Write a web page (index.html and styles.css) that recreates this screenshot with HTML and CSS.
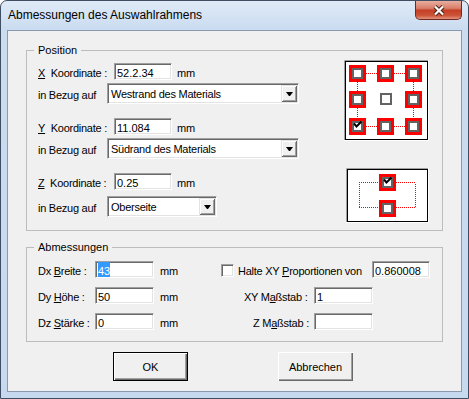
FILE: index.html
```html
<!DOCTYPE html>
<html lang="de">
<head>
  <meta charset="UTF-8" />
  <title>Abmessungen des Auswahlrahmens</title>
  <link rel="stylesheet" href="styles.css">
</head>
<body>
  <div class="window">
    <div class="titlebar">
      <span class="title">Abmessungen des Auswahlrahmens</span>
      <div class="close">
        <svg width="14" height="11" viewBox="0 0 14 11">
          <path d="M3 1.5 L11 9.5 M11 1.5 L3 9.5" stroke="#4a2018" stroke-width="4.2" fill="none"/>
          <path d="M3 1.5 L11 9.5 M11 1.5 L3 9.5" stroke="#fff" stroke-width="2.2" fill="none"/>
        </svg>
      </div>
    </div>

    <div class="client">
      <fieldset class="group group-pos">
        <legend>Position</legend>
        <div class="pos-body">
          <div class="pos-fields">
            <div class="row row-coord">
              <span class="lbl lbl-coord"><u>X</u>&nbsp; Koordinate :</span>
              <div class="field w58">52.2.34</div>
              <span class="unit">mm</span>
            </div>
            <div class="row row-ref">
              <span class="lbl lbl-ref">in Bezug auf</span>
              <div class="combo combo-wide"><span>Westrand des Materials</span><i class="combo-btn"></i></div>
            </div>

            <div class="row row-coord gap-big">
              <span class="lbl lbl-coord"><u>Y</u>&nbsp; Koordinate :</span>
              <div class="field w58">11.084</div>
              <span class="unit">mm</span>
            </div>
            <div class="row row-ref">
              <span class="lbl lbl-ref">in Bezug auf</span>
              <div class="combo combo-wide"><span>Südrand des Materials</span><i class="combo-btn"></i></div>
            </div>

            <div class="row row-coord gap-big">
              <span class="lbl lbl-coord"><u>Z</u>&nbsp; Koordinate :</span>
              <div class="field w58">0.25</div>
              <span class="unit">mm</span>
            </div>
            <div class="row row-ref row-ref-z">
              <span class="lbl lbl-ref">in Bezug auf</span>
              <div class="combo combo-small"><span>Oberseite</span><i class="combo-btn"></i></div>
            </div>
          </div>

          <div class="pos-previews">
            <svg class="preview preview-xy" width="85" height="81" viewBox="0 0 85 81">
              <defs>
                <g id="handle">
                  <rect width="17" height="17" fill="#f00"/>
                  <rect x="3" y="3" width="11" height="11" fill="#636363"/>
                  <rect x="5" y="5" width="7" height="7" fill="#fff"/>
                </g>
                <path id="tick" d="M5 5.5 L7.5 8.5 L12.5 3.5" fill="none" stroke="#000" stroke-width="2"/>
              </defs>
              <rect width="85" height="81" fill="#fff"/>
              <path d="M0.5 80 V0.5 H84" fill="none" stroke="#a0a0a0"/>
              <rect x="1.5" y="1.5" width="82" height="78" fill="none" stroke="#000"/>
              <g class="dots" stroke="#f00" stroke-dasharray="1 1" fill="none">
                <path d="M22 13.5 H33 M50 13.5 H61 M22 66.5 H33 M50 66.5 H61"/>
                <path d="M13.5 22 V31 M13.5 48 V58 M69.5 22 V31 M69.5 48 V58"/>
              </g>
              <use href="#handle" x="5" y="5"/>
              <use href="#handle" x="33" y="5"/>
              <use href="#handle" x="61" y="5"/>
              <use href="#handle" x="5" y="31"/>
              <use href="#handle" x="61" y="31"/>
              <use href="#handle" x="5" y="58"/>
              <use href="#handle" x="33" y="58"/>
              <use href="#handle" x="61" y="58"/>
              <rect x="36" y="33" width="12" height="12" fill="#636363"/>
              <rect x="38" y="35" width="8" height="8" fill="#fff"/>
              <use href="#tick" x="5" y="58"/>
            </svg>

            <svg class="preview preview-z" width="83" height="55" viewBox="0 0 83 55">
              <rect width="83" height="55" fill="#fff"/>
              <path d="M0.5 54 V0.5 H82" fill="none" stroke="#a0a0a0"/>
              <rect x="1.5" y="1.5" width="80" height="52" fill="none" stroke="#000"/>
              <g class="dots" stroke="#f00" stroke-dasharray="1 1" fill="none">
                <path d="M13 14.5 H33 M50 14.5 H70 M13 39.5 H33 M50 39.5 H70"/>
                <path d="M13.5 16 V39 M69.5 16 V39"/>
              </g>
              <use href="#handle" x="33" y="6"/>
              <use href="#handle" x="33" y="32"/>
              <use href="#tick" x="33" y="6"/>
            </svg>
          </div>
        </div>
      </fieldset>

      <fieldset class="group group-dim">
        <legend>Abmessungen</legend>
        <div class="dim-body">
          <div class="row dim-row">
            <span class="lbl lbl-dim">Dx <u>B</u>reite :</span>
            <div class="field w59"><span class="sel">43</span></div>
            <span class="unit unit-dim">mm</span>
            <span class="check"></span>
            <span class="lbl lbl-keep">Halte XY <u>P</u>roportionen von</span>
            <div class="field w58">0.860008</div>
          </div>
          <div class="row dim-row">
            <span class="lbl lbl-dim">Dy <u>H</u>öhe :</span>
            <div class="field w59">50</div>
            <span class="unit unit-dim">mm</span>
            <span class="lbl lbl-scale">XY M<u>a</u>ßstab :</span>
            <div class="field w59">1</div>
          </div>
          <div class="row dim-row">
            <span class="lbl lbl-dim">Dz <u>S</u>tärke :</span>
            <div class="field w59">0</div>
            <span class="unit unit-dim">mm</span>
            <span class="lbl lbl-scale lbl-scale-z">Z M<u>a</u>ßstab :</span>
            <div class="field w59"></div>
          </div>
        </div>
      </fieldset>

      <div class="buttons">
        <button class="btn btn-default">OK</button>
        <button class="btn">Abbrechen</button>
      </div>
    </div>
  </div>
</body>
</html>
```

FILE: styles.css
```css
* {
  box-sizing: border-box;
}

html, body {
  margin: 0;
  padding: 0;
  background: #fff;
}

body {
  font-family: "Liberation Sans", Arial, sans-serif;
  font-size: 11px;
  color: #000;
}

u {
  text-decoration: underline;
  text-underline-offset: 1px;
}

/* window chrome */

.window {
  width: 469px;
  height: 399px;
  border: 1px solid #3f4e62;
  border-radius: 7px 7px 0 0;
  background: linear-gradient(to bottom, #dfeaf7, #cbdcf0 28px, #c6d9ef);
  display: flex;
  flex-direction: column;
  overflow: hidden;
}

.titlebar {
  height: 29px;
  display: flex;
  align-items: flex-start;
  padding-left: 7px;
}

.title {
  font-size: 12px;
  line-height: 15px;
  margin-top: 7px;
  color: #000;
}

.close {
  margin-left: auto;
  margin-right: 6px;
  width: 47px;
  height: 19px;
  border: 1px solid #6e2a20;
  border-top: none;
  border-radius: 0 0 5px 5px;
  background: linear-gradient(to bottom, #e9ad9e, #d8806b 40%, #c53f26 52%, #cc5438 80%, #e2937e);
  display: flex;
  align-items: center;
  justify-content: center;
}

.client {
  flex: 1;
  margin: 0 6px 6px;
  border: 1px solid #8a9aae;
  background: #f0f0f0;
  padding: 13px 18px 0;
}

/* group boxes */

.group {
  margin: 0;
  border: 1px solid #bcbcbc;
  padding: 0 0 0 11px;
  min-width: 0;
}

.group legend {
  padding: 0 4px;
  margin-left: -4px;
  line-height: 13px;
  font-size: 11px;
}

.group-dim {
  margin-top: 10px;
}

.pos-body {
  display: flex;
  height: 173px;
}

.pos-fields {
  display: flex;
  flex-direction: column;
}

.pos-previews {
  margin-left: auto;
  margin-right: 13px;
  display: flex;
  flex-direction: column;
  align-items: flex-end;
}

.preview {
  display: block;
}

.preview .dots {
  shape-rendering: crispEdges;
}

.preview-xy {
  margin-top: 3px;
}

.preview-z {
  margin-top: 27px;
}

.dim-body {
  height: 87px;
  display: flex;
  flex-direction: column;
}

/* rows */

.row {
  display: flex;
  align-items: center;
  letter-spacing: -0.25px;
}

.lbl {
  line-height: 13px;
  padding-top: 3px;
  white-space: nowrap;
}

.row-coord {
  height: 17px;
  margin-top: 6px;
}

.row-coord.gap-big {
  margin-top: 14px;
}

.row-ref {
  height: 21px;
  margin-top: 3px;
}

.row-ref-z {
  margin-top: 6px;
}

.lbl-coord {
  width: 76px;
}

.lbl-ref {
  width: 69px;
}

.unit {
  margin-left: 5px;
  line-height: 13px;
  padding-top: 3px;
}

.dim-row {
  height: 17px;
  margin-top: 9px;
}

.dim-row:first-child {
  margin-top: 7px;
}

.lbl-dim {
  width: 57px;
}

.unit-dim {
  margin-left: 0;
  width: 67px;
  padding-left: 6px;
}

.lbl-keep {
  width: 134px;
  margin-left: 4px;
}

.lbl-scale {
  width: 93px;
  padding-left: 23px;
}

.lbl-scale-z {
  padding-left: 32px;
}

/* controls */

.field {
  height: 17px;
  background: #fff;
  border-top: 1px solid #a0a0a0;
  border-left: 1px solid #a0a0a0;
  border-right: 1px solid #fff;
  border-bottom: 1px solid #fff;
  box-shadow: inset 1px 1px #696969, inset -1px -1px #e3e3e3;
  padding: 2px 2px 0;
  line-height: 14px;
  overflow: hidden;
  white-space: nowrap;
  letter-spacing: 0;
}

.w58 {
  width: 58px;
}

.w59 {
  width: 59px;
}

.sel {
  display: inline-block;
  vertical-align: top;
  margin-top: -2px;
  padding-top: 2px;
  height: 15px;
  background: #3399ff;
  color: #fff;
}

.combo {
  height: 21px;
  display: flex;
  align-items: stretch;
  background: #fff;
  border-top: 1px solid #a0a0a0;
  border-left: 1px solid #a0a0a0;
  border-right: 1px solid #fff;
  border-bottom: 1px solid #fff;
  box-shadow: inset 1px 1px #696969, inset -1px -1px #e3e3e3;
  padding: 1px;
}

.combo span {
  line-height: 13px;
  padding: 2px 0 0 2px;
  align-self: center;
  white-space: nowrap;
}

.combo-wide {
  width: 192px;
}

.combo-small {
  width: 110px;
}

.combo-btn {
  margin-left: auto;
  width: 16px;
  background: #f0f0f0;
  box-shadow: inset 1px 1px #e3e3e3, inset -1px -1px #696969, inset 2px 2px #fff, inset -2px -2px #a0a0a0;
  display: flex;
  align-items: center;
  justify-content: center;
}

.combo-btn::after {
  content: "";
  width: 1px;
  height: 0;
  border-top: 4px solid #000;
  border-left: 3px solid transparent;
  border-right: 3px solid transparent;
  box-sizing: content-box;
}

.check {
  width: 13px;
  height: 13px;
  background: #fff;
  border-top: 1px solid #a0a0a0;
  border-left: 1px solid #a0a0a0;
  border-right: 1px solid #fff;
  border-bottom: 1px solid #fff;
  box-shadow: inset 1px 1px #696969, inset -1px -1px #e3e3e3;
  margin-top: 1px;
}

/* buttons */

.buttons {
  display: flex;
  gap: 90px;
  margin-top: 10px;
  padding-left: 87px;
}

.btn {
  width: 75px;
  height: 29px;
  font-family: inherit;
  font-size: 11px;
  color: #000;
  background: #f0f0f0;
  border: none;
  border-radius: 0;
  padding: 0;
  box-shadow: inset 1px 1px #fff, inset -1px -1px #696969, inset -2px -2px #a0a0a0;
}

.btn-default {
  border: 1px solid #000;
}
```
